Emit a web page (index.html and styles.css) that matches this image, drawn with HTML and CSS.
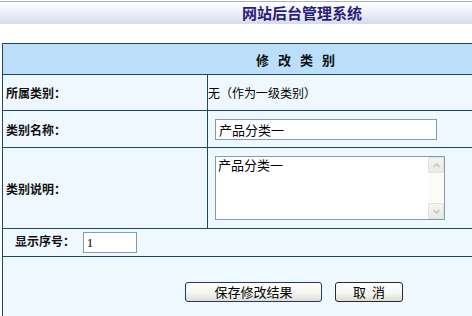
FILE: index.html
```html
<!DOCTYPE html>
<html>
<head>
    <title>网站后台管理系统 - 修改类别</title>
    <meta charset="UTF-8">
    <link rel="stylesheet" href="styles.css">
</head>
<body>
    <div class="page">
        <div class="top-bar">
            <h1>网站后台管理系统</h1>
        </div>

        <form class="edit-form">
            <table class="edit-table">
                <tr class="row-head">
                    <th colspan="2" class="caption">修 改 类 别</th>
                </tr>
                <tr class="row-parent">
                    <td class="label">所属类别：</td>
                    <td class="value">无（作为一级类别）</td>
                </tr>
                <tr class="row-name">
                    <td class="label">类别名称：</td>
                    <td class="value"><input type="text" class="txt-name" value="产品分类一"></td>
                </tr>
                <tr class="row-desc">
                    <td class="label">类别说明：</td>
                    <td class="value">
                        <div class="desc-box">
                            <textarea class="txt-desc">产品分类一</textarea>
                            <!-- old style scrollbar, drawn over the textarea -->
                            <div class="fake-scroll">
                                <span class="arrow">
                                    <svg width="7" height="5" viewBox="0 0 7 5"><path d="M0.5 4 L3.5 1 L6.5 4" fill="none" stroke="#c2c6ba" stroke-width="1.5"/></svg>
                                </span>
                                <span class="arrow">
                                    <svg width="7" height="5" viewBox="0 0 7 5"><path d="M0.5 1 L3.5 4 L6.5 1" fill="none" stroke="#c2c6ba" stroke-width="1.5"/></svg>
                                </span>
                            </div>
                        </div>
                    </td>
                </tr>
                <tr class="row-order">
                    <td colspan="2" class="order">
                        <span class="label-inline">显示序号：</span>
                        <input type="text" class="txt-order" value="1">
                    </td>
                </tr>
                <tr class="row-buttons">
                    <td colspan="2">
                        <div class="buttons">
                            <button type="submit" class="btn btn-save">保存修改结果</button>
                            <button type="button" class="btn btn-cancel">取&nbsp;&nbsp;消</button>
                        </div>
                    </td>
                </tr>
            </table>
        </form>
    </div>
</body>
</html>
```

FILE: styles.css
```css
html, body {
    margin: 0;
    padding: 0;
    background: #fff;
    overflow: hidden;
}
body {
    font-family: "Noto Sans CJK SC", "DejaVu Sans", sans-serif;
    font-size: 12px;
    color: #000;
}
.page {
    width: 604px;
}
.top-bar {
    margin-top: 1px;
    border-top: 1px solid #a8b2bf;
    height: 22px;
    background: linear-gradient(to bottom, #ffffff 0%, #eef1f9 45%, #d6dcef 100%);
    text-align: center;
}
.top-bar h1 {
    margin: 0;
    font-size: 15px;
    line-height: 22px;
    font-weight: bold;
    color: #2b1c78;
}
.edit-form {
    margin: 19px 0 0 2px;
}
.edit-table {
    width: 590px;
    border-collapse: collapse;
    border: 1px solid #1c4a5a;
    background: #f0f8ff;
}
.edit-table td, .edit-table th {
    border: 1px solid #1c4a5a;
    padding: 0;
}
.row-head { height: 31px; }
.row-parent { height: 36px; }
.row-name { height: 37px; }
.row-desc { height: 81px; }
.row-order { height: 28px; }
.row-buttons { height: 70px; }
.caption {
    background: #bbdffa;
    font-weight: bold;
    font-size: 13px;
    text-align: center;
    letter-spacing: 3px;
    color: #111;
}
.label {
    width: 201px;
    padding-left: 3px !important;
    font-weight: bold;
    color: #111;
}
.value {
    padding-left: 1px;
}
.row-buttons td {
    vertical-align: top;
}
.txt-name {
    display: block;
    margin-left: 7px;
    width: 214px;
    height: 19px;
    padding: 0 3px;
    border: 1px solid #7f9db9;
    box-sizing: content-box;
    font-family: "Noto Sans CJK SC", sans-serif;
    font-size: 13px;
    color: #000;
    background: #fff;
}
.desc-box {
    position: relative;
    width: 230px;
    height: 64px;
    margin-left: 7px;
}
.txt-desc {
    display: block;
    margin: 0;
    width: 230px;
    height: 64px;
    padding: 0 18px 0 2px;
    border: 1px solid #7f9db9;
    font-family: "Noto Sans CJK SC", sans-serif;
    font-size: 13px;
    line-height: 16px;
    resize: none;
    overflow: hidden;
    box-sizing: border-box;
    background: #fff;
}
.fake-scroll {
    position: absolute;
    top: 1px;
    right: 1px;
    bottom: 1px;
    width: 16px;
    background: #fbfbf8;
    display: flex;
    flex-direction: column;
    justify-content: space-between;
}
.arrow {
    display: flex;
    align-items: center;
    justify-content: center;
    height: 16px;
    background: linear-gradient(to bottom, #f4f5f1, #e8eae4);
    border: 1px solid #e0e3da;
    border-radius: 2px;
    box-sizing: border-box;
}
.order {
    padding-left: 12px !important;
}
.label-inline {
    font-weight: bold;
    color: #111;
    margin-right: 5px;
}
.txt-order {
    width: 46px;
    height: 19px;
    padding: 0 3px;
    border: 1px solid #7f9db9;
    vertical-align: middle;
    font-family: "Liberation Serif", serif;
    font-size: 13px;
    box-sizing: content-box;
}
.buttons {
    display: flex;
    gap: 13px;
    padding: 25px 0 0 182px;
}
.btn {
    height: 20px;
    border: 1px solid #1c3a6c;
    border-radius: 3px;
    background: linear-gradient(to bottom, #ffffff 0%, #f4f4f0 60%, #dcdcd4 100%);
    font-family: "Noto Sans CJK SC", sans-serif;
    font-size: 13px;
    line-height: 18px;
    padding: 0;
    color: #000;
}
.btn-save {
    width: 137px;
}
.btn-cancel {
    width: 68px;
    border-color: #2a2a2a;
}
```
